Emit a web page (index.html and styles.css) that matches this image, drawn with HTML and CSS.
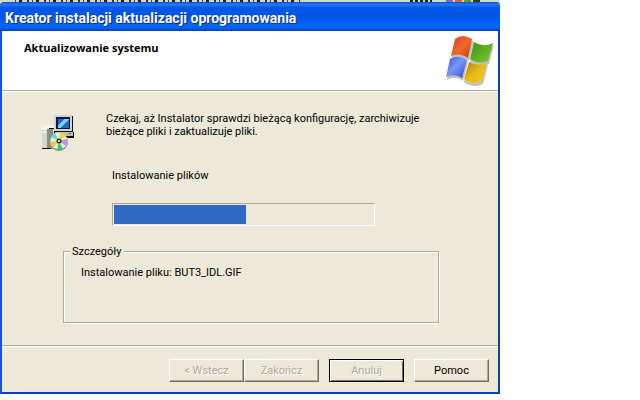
FILE: index.html
```html
<!DOCTYPE html>
<html lang="pl">
<head>
<meta charset="utf-8">
<title>Kreator instalacji aktualizacji oprogramowania</title>
<link rel="stylesheet" href="styles.css">
</head>
<body>
<div class="screen">
  <div class="behind" aria-hidden="true">
    <span class="behind-text"></span>
    <span class="behind-clock"></span>
    <span class="behind-logo"><i class="blue"></i><i class="red"></i><i class="green"></i><i class="dark"></i></span>
  </div>
  <main class="window">
    <h1 class="titlebar">Kreator instalacji aktualizacji oprogramowania</h1>
    <header class="banner">
      <h2 class="heading">Aktualizowanie systemu</h2>
      <svg class="flag" viewBox="0 0 50 52" aria-hidden="true">
        <defs>
          <linearGradient id="r" x1="0" y1="0" x2="1" y2="1"><stop offset="0" stop-color="#c8401c"/><stop offset=".5" stop-color="#f4672c"/><stop offset="1" stop-color="#c83c10"/></linearGradient>
          <linearGradient id="g" x1="0" y1="0" x2="1" y2="1"><stop offset="0" stop-color="#3f8c14"/><stop offset=".5" stop-color="#5cb020"/><stop offset="1" stop-color="#7cc840"/></linearGradient>
          <linearGradient id="b" x1="0" y1="0" x2="1" y2="1"><stop offset="0" stop-color="#2f50d0"/><stop offset=".45" stop-color="#7898f8"/><stop offset="1" stop-color="#2848c8"/></linearGradient>
          <linearGradient id="y" x1="0" y1="0" x2="1" y2="1"><stop offset="0" stop-color="#a87c08"/><stop offset=".5" stop-color="#e8bc14"/><stop offset="1" stop-color="#f0cc30"/></linearGradient>
        </defs>
        <g fill="#c4c0c0" transform="translate(1 2)">
          <path d="M9 4Q18-2 27 4L22 23Q14 17 4 22Z"/><path d="M28 6Q37 13 47 7L42 26Q32 31 23 24Z"/>
          <path d="M4 23Q13 18 21 24L16 43Q9 37 0 42Z"/><path d="M23 26Q32 32 41 27L36 46Q26 51 17 44Z"/>
        </g>
        <path fill="url(#r)" d="M9 3Q17-3 26 3L22 22Q14 16 5 20Z"/>
        <path fill="url(#g)" d="M28 6Q37 12 47 7L42 25Q33 29 24 23Z"/>
        <path fill="url(#b)" d="M4 23Q13 18 21 24L16 42Q9 37 0 41Z"/>
        <path fill="url(#y)" d="M23 26Q32 31 41 27L36 45Q27 50 18 43Z"/>
      </svg>
    </header>
    <section class="content">
      <div class="intro">
        <svg class="installer" viewBox="0 0 34 36" shape-rendering="crispEdges" aria-hidden="true">
          <path fill="#111" d="M14 1h18v16h1v6H18v9H2V15h4l2-2h6z"/>
          <path fill="#d4d4d0" d="M1 14h12v19H1z"/><path fill="#8c8c88" d="M6 14h6v20H6z"/><path fill="#f4f4f0" d="M1 13l5-3h7v3H6v2H1zM2 16h3v2H2z"/>
          <path fill="#111" d="M1 33h9v1H1z"/>
          <path fill="#d4d4cc" d="M13 0h18v16H13z"/><path fill="#101060" d="M15 2h14v12H15z"/>
          <path fill="#2868b8" d="M17 4h11v9H17z"/><path fill="#70d8f0" d="M17 13v-3l7-6h4l-9 9z"/>
          <path fill="#bcbcb8" d="M14 17h18v4H14z"/><path fill="#0a0" d="M28 18h2v1h-2z"/>
          <g shape-rendering="auto"><circle cx="18" cy="27" r="9" fill="#8c8c8c"/><circle cx="18" cy="26" r="8.500" fill="#e8ecdc"/>
          <path fill="#70d8c8" d="M18 26L10 22A9 9 0 0 1 14 18z"/><path fill="#e8d850" d="M18 26L19 17A9 9 0 0 1 25 21z"/><path fill="#c890d8" d="M18 26L26 24A9 9 0 0 1 25 31z"/><path fill="#40c870" d="M18 26L22 34A9 9 0 0 1 16 35z"/><path fill="#e0d040" d="M18 26L12 33A9 9 0 0 1 9 27z"/>
          <circle cx="18" cy="26" r="2.500" fill="#333"/><circle cx="18" cy="26" r="1" fill="#fff"/></g>
        </svg>
        <p class="message">Czekaj, aż Instalator sprawdzi bieżącą konfigurację, zarchiwizuje bieżące pliki i zaktualizuje pliki.</p>
      </div>
      <div class="task">
        <p class="label" id="task">Instalowanie plików</p>
        <div class="progress" role="progressbar" aria-labelledby="task" aria-valuemin="0" aria-valuemax="100" aria-valuenow="51"><div class="bar" style="width:51%"></div></div>
      </div>
      <fieldset class="details">
        <legend>Szczegóły</legend>
        <p>Instalowanie pliku: BUT3_IDL.GIF</p>
      </fieldset>
    </section>
    <footer class="actions">
      <div class="pair"><button type="button" disabled>&lt; Wstecz</button><button type="button" disabled>Zakończ</button></div>
      <button type="button" class="default" disabled>Anuluj</button>
      <button type="button">Pomoc</button>
    </footer>
  </main>
</div>
</body>
</html>
```
FILE: styles.css
```css
* { box-sizing: border-box; }
body { margin: 0; background: #fff; color: #000; font: 11px/13px "Roboto", "Liberation Sans", sans-serif; }
h1, h2, p { margin: 0; }
.screen { max-width: 500px; }
.behind { display: flex; height: 2px; padding: 0 0 0 12px; background: #d8d6cc; }
.behind-text { width: 288px; background: repeating-linear-gradient(90deg, #d8d6cc 0 3px, #444 3px 4px, #d8d6cc 4px 7px, #222 7px 10px, #d8d6cc 10px 15px, #333 15px 17px); }
.behind-clock { width: 22px; margin-left: 110px; background: repeating-linear-gradient(90deg, #222 0 3px, #d8d6cc 3px 5px); }
.behind-logo { display: flex; gap: 2px; margin-left: 14px; }
.behind-logo i { width: 7px; }
.blue { background: #6878c8; }
.red { background: #e06040; }
.green { background: #60a030; }
.dark { background: #333; }
.window { border: solid #0a3fc8; border-width: 0 2px 2px; border-right-color: #123f98; border-left-color: #0a56ec; background: #ece9d8; border-radius: 4px 4px 0 0; }
.titlebar { height: 29px; margin: 0 -2px; padding: 1px 5px 0; border-radius: 4px 4px 0 0; background: linear-gradient(#0850c8, #2478f4 8%, #0458e8 20%, #0054e4 50%, #0364fc 80%, #0460f4 90%, #0040b8); color: #fff; font: bold 14px/30px "Roboto", sans-serif; text-shadow: 1px 1px #0a2c88; }
.banner { display: flex; justify-content: space-between; height: 60px; padding: 5px 2px 0 22px; background: #fff; border-bottom: 1px solid #aca899; }
.heading { padding-top: 5px; font: bold 11px/14px "Open Sans", sans-serif; }
.flag { width: 50px; height: 52px; }
.content { padding: 20px 59px 22px 39px; border-top: 1px solid #fff; }
.intro { display: flex; gap: 31px; height: 50px; }
.installer { flex: none; width: 34px; height: 36px; margin-top: 3px; }
.message { max-width: 320px; }
.task { padding: 7px 64px 0 71px; }
.progress { height: 23px; margin-top: 21px; padding: 1px; border: 1px solid; border-color: #aca899 #fff #fff #aca899; }
.bar { height: 100%; background: #316ac5; }
.details { height: 78px; margin: 19px 0 0 22px; padding: 8px 17px; border: 1px solid #aca899; box-shadow: 1px 1px #fff, inset 1px 1px #fff; }
.details legend { margin-left: -11px; padding: 0 2px; background: #ece9d8; }
.actions { display: flex; justify-content: flex-end; gap: 10px; padding: 13px 9px 10px; border-top: 1px solid #aca899; box-shadow: inset 0 1px #fff; }
.pair { display: flex; }
button { width: 75px; height: 23px; padding: 0; border: 1px solid; border-color: #fff #716f64 #716f64 #fff; border-radius: 0; background: #ece9d8; box-shadow: inset -1px -1px #aca899; color: #000; font: inherit; }
button:disabled { color: #aca899; text-shadow: 1px 1px #fff; }
button.default { border-color: #000; box-shadow: inset 1px 1px #fff, inset -1px -1px #716f64; }
```
